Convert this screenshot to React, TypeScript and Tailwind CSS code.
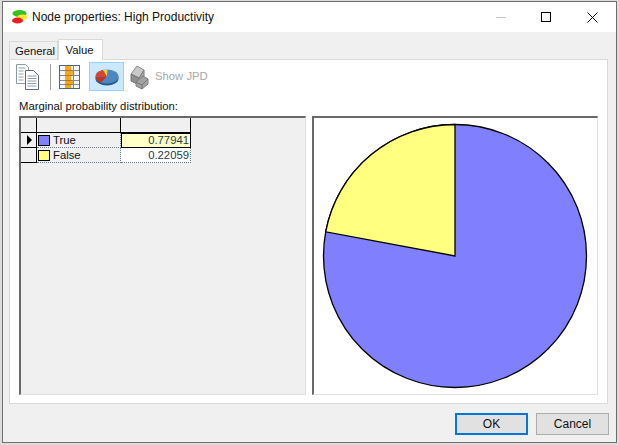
function AppIcon() {
  return (
    <svg width="16" height="14" viewBox="0 0 16 14" className="shrink-0">
      <ellipse cx="7.5" cy="3.5" rx="7" ry="3.4" fill="#35c21e" />
      <ellipse cx="10.5" cy="7" rx="5" ry="2.6" fill="#f4e92a" />
      <ellipse cx="5.5" cy="10.5" rx="5.5" ry="3" fill="#ee1c1c" />
    </svg>
  );
}

function CopyIcon() {
  return (
    <svg width="23" height="26" viewBox="0 0 23 26">
      <path d="M0.5 0.5h9l3 3v16h-12z" fill="#fff" stroke="#8d97a4" />
      <path d="M9.5 6.5h8l5 5v14h-13z" fill="#fff" stroke="#5f6a78" />
      <path d="M2.5 4h7M2.5 7h5M2.5 10h5M2.5 13h5M2.5 16h5M11.5 12h9M11.5 14.5h9M11.5 17h9M11.5 19.5h9M11.5 22h9" stroke="#93a0b2" />
    </svg>
  );
}

function TableIcon() {
  return (
    <svg width="21" height="24" viewBox="0 0 21 24">
      <rect x="0.5" y="0.5" width="20" height="23" fill="#f6f6f6" stroke="#52647c" />
      <path d="M6 1h6v5h2v5h-2v4h2v5h-2v3H6z" fill="#f5a81f" />
      <path d="M1 5.5h19M1 10.5h19M1 15.5h19M1 19.5h19M14.500 1v22" stroke="#7b899c" />
      <path d="M6 5.5h6M6 10.5h6M6 15.5h6M6 19.500h6" stroke="#bb7409" />
    </svg>
  );
}

function PieIcon() {
  return (
    <svg width="24" height="18" viewBox="0 0 24 18">
      <ellipse cx="12" cy="10.500" rx="11.500" ry="7" fill="#275a8e" />
      <ellipse cx="12" cy="8.500" rx="11.500" ry="7" fill="#4b88c2" />
      <path d="M12 8.500 L0.600 9 A11.500 7 0 0 0 6 14.500 Z" fill="#c8321e" />
      <path d="M12 8.500 L0.600 8.500 A11.500 7 0 0 1 8 2 Z" fill="#d8462a" />
      <path d="M12 8.500 L8 2 A11.500 7 0 0 1 12.500 1.500 Z" fill="#f4d23c" />
    </svg>
  );
}

function JpdIcon() {
  return (
    <svg width="20" height="26" viewBox="0 0 20 26">
      <path d="M2 10 L8 2 L15 6 L10 14 Z" fill="#c9c9c9" stroke="#8c8c8c" />
      <path d="M2 10 L10 14 L10 21 L2 17 Z" fill="#8e8e8e" stroke="#777" />
      <path d="M10 14 L15 6 L15 12 L10 21 Z" fill="#a8a8a8" stroke="#808080" />
      <path d="M7 18 L14 12 L19 15 L19 20 L13 25 L7 22 Z" fill="#a3a3a3" stroke="#7b7b7b" />
      <path d="M7 18 L13 21 L19 15 M13 21 V25" fill="none" stroke="#777" />
    </svg>
  );
}

function Pie() {
  return (
    <svg width="266" height="266" viewBox="0 0 266 266">
      <circle cx="133" cy="133" r="131.500" fill="#8080ff" stroke="#000" strokeWidth="1.300" />
      <path d="M133 133 L3.700 108.800 A131.500 131.500 0 0 1 133 1.500 Z" fill="#ffff80" stroke="#000" strokeWidth="1.300" />
    </svg>
  );
}

function Row({ label, color, value, active }: { label: string; color: string; value: string; active?: boolean }) {
  return (
    <div className="flex h-[15px]">
      <div className="flex w-[16px] items-center justify-center border-b border-r border-black">
        {active && <div className="ml-0.5 h-0 w-0 border-y-[5px] border-l-[5px] border-y-transparent border-l-black" />}
      </div>
      <div className="flex w-[84px] items-center gap-[3px] border-b border-r border-dotted border-[#6a7a8a] pl-[1px]">
        <div className="h-[11px] w-[12px] border border-black" style={{ backgroundColor: color }} />
        <span>{label}</span>
      </div>
      <div
        className={
          active
            ? "w-[70px] border border-black bg-[#ffffc8] pr-[1px] text-right leading-[13px] text-[#1f3a4a]"
            : "w-[70px] border-b border-r border-dotted border-[#6a7a8a] bg-white pr-[1px] text-right leading-[14px] text-[#1f3a4a]"
        }
      >
        {value}
      </div>
    </div>
  );
}

export default function App() {
  return (
    <div className="h-[445px] w-[619px] overflow-hidden bg-[#dcdcdc] pb-[2px] pl-[2px] pr-[2px] pt-[1px] font-['Liberation_Sans',sans-serif] text-[11.300px] text-[#111]">
      <div className="flex h-[442px] w-[615px] flex-col border border-[#6e6e6e] bg-[#f0f0f0]">
        {/* title bar */}
        <div className="flex h-[30px] shrink-0 items-center bg-white pl-[9px]">
          <AppIcon />
          <span className="ml-[4px] text-[12px]">Node properties: High Productivity</span>
          <div className="ml-auto flex items-center">
            <div className="mr-[35px] h-px w-[10px] bg-[#c4c4c4]" />
            <div className="mr-[36px] h-[10px] w-[10px] border border-black" />
            <svg width="11" height="11" viewBox="0 0 11 11" className="mr-[18px]">
              <path d="M0.500 0.500L10.500 10.500M10.500 0.500L0.500 10.500" stroke="#000" />
            </svg>
          </div>
        </div>

        {/* tabs */}
        <div className="ml-[6px] mr-[8px] mt-[7px] flex flex-1 flex-col">
          <div className="relative z-10 flex h-[20px] items-end">
            <div className="flex h-[18px] w-[49px] items-center justify-center border border-b-0 border-[#d9d9d9] bg-[#f0f0f0] pl-[3px] pt-[2px]">General</div>
            <div className="-mb-px flex h-[21px] w-[45px] items-center justify-center border border-b-0 border-[#d9d9d9] bg-white pr-[2px]">Value</div>
          </div>

          <div className="flex h-[345px] flex-col border border-[#d9d9d9] bg-white px-[9px]">
            {/* toolbar */}
            <div className="flex h-[32px] items-center pt-[1px]">
              <div className="-ml-[3px]"><CopyIcon /></div>
              <div className="ml-[11px] h-[26px] w-px bg-[#a0a0a0]" />
              <div className="ml-[8px]"><TableIcon /></div>
              <div className="ml-[9px] flex h-[29px] w-[35px] items-center justify-center border border-[#99d1ff] bg-[#cce8ff]">
                <PieIcon />
              </div>
              <div className="ml-[5px]"><JpdIcon /></div>
              <span className="ml-[6px] text-[#a8a8a8]">Show JPD</span>
            </div>

            <div className="mt-[7px] h-[14px] leading-[14px]">Marginal probability distribution:</div>

            {/* grid and chart */}
            <div className="mt-[3px] flex h-[279px] gap-[6px]">
              <div className="flex w-[287px] flex-col border-b border-r border-l-2 border-t-2 border-b-[#e0e0e0] border-l-[#696969] border-r-[#e0e0e0] border-t-[#696969] bg-[#f0f0f0]">
                <div className="flex h-[15px]">
                  <div className="w-[16px] border-b border-r border-black" />
                  <div className="w-[84px] border-b border-r border-black" />
                  <div className="w-[70px] border-b border-r border-black" />
                </div>
                <Row label="True" color="#8080ff" value="0.77941" active />
                <Row label="False" color="#ffff80" value="0.22059" />
              </div>
              <div className="flex w-[287px] items-center justify-center border-b border-r border-l-2 border-t-2 border-b-[#e0e0e0] border-l-[#696969] border-r-[#e0e0e0] border-t-[#696969] bg-white">
                <Pie />
              </div>
            </div>
          </div>
        </div>

        {/* buttons */}
        <div className="relative flex h-[36px] shrink-0 items-start justify-end gap-[8px] pr-[7px] pt-[7px] text-[12px]">
          <div className="flex h-[22px] w-[73px] items-center justify-center border-2 border-[#0078d7] bg-[#e1e1e1]">OK</div>
          <div className="flex h-[22px] w-[73px] items-center justify-center border border-[#adadad] bg-[#e1e1e1]">Cancel</div>
        </div>
      </div>
    </div>
  );
}
